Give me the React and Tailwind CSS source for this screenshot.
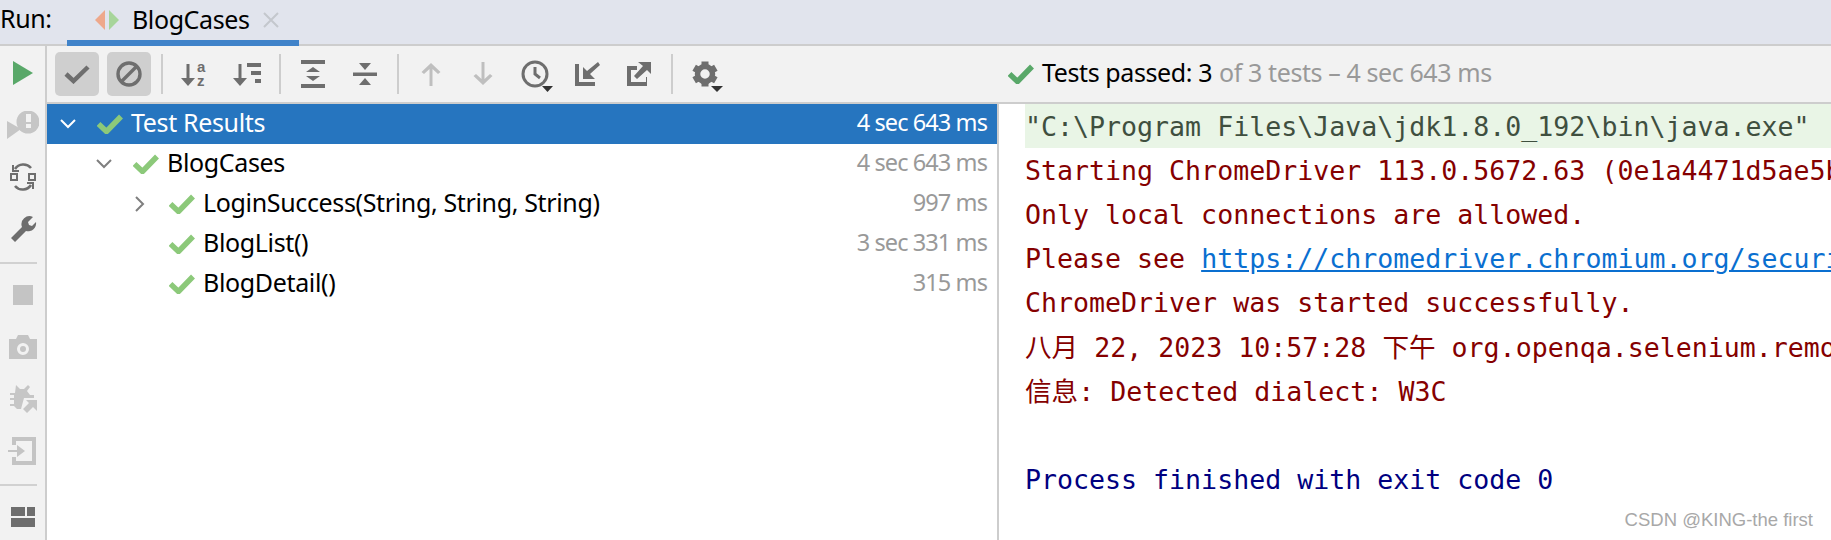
const ui = "font-['Noto_Sans',sans-serif]"

function Tick({ className }) {
  return (
    <svg className={className} width="26" height="20" viewBox="0 0 26 20">
      <path d="M1.5 10 L9.5 17.5 L24 2.5" fill="none" stroke="currentColor" strokeWidth="5.5" />
    </svg>
  )
}

function Chevron({ open, className }) {
  return (
    <svg className={className} width="18" height="18" viewBox="0 0 18 18">
      <path d={open ? "M2 5 L9 12 L16 5" : "M5 2 L12 9 L5 16"} fill="none" stroke="currentColor" strokeWidth="2" />
    </svg>
  )
}

function Side({ children }) {
  return <div className="flex h-[52px] w-[45px] shrink-0 items-center justify-center">{children}</div>
}

function Tool({ children, active }) {
  return (
    <div className={`flex h-11 w-11 shrink-0 items-center justify-center rounded-[5px] ${active ? "bg-[#cfcfcf]" : ""}`}>
      {children}
    </div>
  )
}

function Sep() {
  return <div className="mx-[10px] h-10 w-[2px] shrink-0 bg-[#cdcdcd]" />
}

function Row({ indent, chevron, name, time, selected }) {
  return (
    <div className={`flex h-10 items-center pr-[10px] ${selected ? "bg-[#2675bf] text-white" : "text-black"}`}>
      <div className="flex w-[30px] shrink-0 justify-center" style={{ marginLeft: indent }}>
        {chevron && <Chevron open={chevron === "open"} className={selected ? "text-white" : "text-[#7f7f7f]"} />}
      </div>
      <Tick className="ml-[14px] mr-[8px] shrink-0 text-[#8cc97a]" />
      <span className="pb-[2px] text-[25px] tracking-[-0.35px] whitespace-nowrap">{name}</span>
      <span className={`ml-auto pb-[2px] text-[23.5px] tracking-[-0.9px] whitespace-nowrap ${selected ? "text-white" : "text-[#999999]"}`}>{time}</span>
    </div>
  )
}

function ConsoleLine({ children, className = "pl-[26px]" }) {
  return <div className={`flex h-[44.1px] items-center pt-[2px] whitespace-pre ${className}`}>{children}</div>
}

export default function App() {
  return (
    <div className={`relative flex h-[540px] w-[1831px] flex-col overflow-hidden bg-white ${ui}`}>
      {/* tab header */}
      <div className="flex h-[46px] shrink-0 items-stretch border-b-2 border-[#cdcdcd] bg-[#e1e4ed]">
        <div className="flex w-[67px] items-center pb-[6px] text-[25px] tracking-[-0.4px] text-black">Run:</div>
        <div className="-mb-[2px] flex w-[232px] items-center border-b-[6px] border-[#4083c9] pl-[28px]">
          <svg width="24" height="20" viewBox="0 0 24 20" className="mr-[13px] shrink-0">
            <path d="M10 0 L10 20 L0 10 Z" fill="#eea88b" />
            <path d="M14 0 L14 20 L24 10 Z" fill="#a7d59a" />
          </svg>
          <span className="text-[25px] tracking-[-0.4px] text-black">BlogCases</span>
          <svg width="16" height="16" viewBox="0 0 16 16" className="ml-[14px] shrink-0">
            <path d="M1 1 L15 15 M15 1 L1 15" stroke="#c4c7cd" strokeWidth="2" />
          </svg>
        </div>
      </div>

      <div className="flex min-h-0 flex-1">
        {/* left strip */}
        <div className="flex w-[47px] shrink-0 flex-col border-r-2 border-[#cdcdcd] bg-[#f2f2f2]">
          <div className="mt-[1px]" />
          <Side>
            <svg width="20" height="24" viewBox="0 0 20 24"><path d="M0 0 L20 12 L0 24 Z" fill="#59a869" /></svg>
          </Side>
          <Side>
            <svg width="32" height="28" viewBox="0 0 32 28">
              <path d="M0 10 L14 18 L0 28 Z" fill="#c6c6c6" />
              <circle cx="21" cy="11" r="11.5" fill="#c6c6c6" />
              <rect x="19" y="3" width="5" height="8" fill="#f2f2f2" />
              <rect x="19" y="13" width="5" height="4" fill="#f2f2f2" />
            </svg>
          </Side>
          <Side>
            <svg width="26" height="30" viewBox="0 0 26 30" fill="none" stroke="#6e6e6e" strokeWidth="2.6">
              <path d="M5 7 A10 10 0 0 1 21 6" />
              <path d="M21 23 A10 10 0 0 1 5 24" />
              <path d="M3 3 L3 9 L9 9" strokeWidth="2" />
              <path d="M23 27 L23 21 L17 21" strokeWidth="2" />
              <rect x="1" y="12" width="6" height="6" strokeWidth="2" />
              <rect x="19" y="12" width="6" height="6" strokeWidth="2" />
            </svg>
          </Side>
          <Side>
            <svg width="28" height="28" viewBox="0 0 28 28">
              <path d="M2 23 L13 12 A8 8 0 0 1 24 2 L19 7 L20 10 L23 11 L27 7 A8 8 0 0 1 17 16 L6 27 Z" fill="#6e6e6e" />
            </svg>
          </Side>
          <div className="mt-[7px] mb-[5px] mr-[8px] h-[2px] shrink-0 bg-[#d1d1d1]" />
          <Side>
            <div className="h-5 w-5 bg-[#c4c4c4]" />
          </Side>
          <Side>
            <svg width="28" height="24" viewBox="0 0 28 24">
              <path fillRule="evenodd" d="M0 4 H7 L9 0 H19 L21 4 H28 V24 H0 Z M14 8 A6 6 0 1 0 14 20 A6 6 0 1 0 14 8 Z M14 11 A3 3 0 1 1 14 17 A3 3 0 1 1 14 11 Z" fill="#c4c4c4" />
            </svg>
          </Side>
          <Side>
            <svg width="30" height="30" viewBox="0 0 30 30">
              <path d="M8 1 L12 5 H16 L20 1 L22 3 L19 7 L22 11 L26 11 V14 L16 14 L13 25 H9 L6 22 H2 V20 H6 V16 H2 V14 H6 V11 H2 V9 H7 Z" fill="#c6c6c6" />
              <path d="M18 16 H29 V27 L25 23 L19 29 L15 25 L21 19 Z" fill="#c6c6c6" />
            </svg>
          </Side>
          <Side>
            <svg width="30" height="28" viewBox="0 0 30 28" fill="#c4c4c4">
              <path fillRule="evenodd" d="M4 0 H28 V28 H4 V20 H8 V24 H24 V4 H8 V8 H4 Z" />
              <path d="M0 13 H9 V8 L17 14 L9 20 V15 H0 Z" />
            </svg>
          </Side>
          <div className="mt-[7px] mb-[5px] mr-[8px] h-[2px] shrink-0 bg-[#d1d1d1]" />
          <Side>
            <svg width="24" height="20" viewBox="0 0 24 20" fill="#6e6e6e">
              <rect x="0" y="0" width="14" height="9" />
              <rect x="16" y="0" width="8" height="9" />
              <rect x="0" y="11" width="24" height="9" />
            </svg>
          </Side>
        </div>

        {/* main */}
        <div className="flex min-w-0 flex-1 flex-col">
          {/* toolbar */}
          <div className="flex h-[58px] shrink-0 items-center border-b-2 border-[#cdcdcd] bg-[#f2f2f2] pl-[8px]">
            <Tool active>
              <svg width="26" height="20" viewBox="0 0 26 20"><path d="M2 10 L9.5 17 L24 3" fill="none" stroke="#6e6e6e" strokeWidth="4.5" /></svg>
            </Tool>
            <div className="w-[8px] shrink-0" />
            <Tool active>
              <svg width="26" height="26" viewBox="0 0 26 26" fill="none" stroke="#6e6e6e" strokeWidth="3.4">
                <circle cx="13" cy="13" r="11" />
                <path d="M6 20 L20 6" />
              </svg>
            </Tool>
            <Sep />
            <Tool>
              <svg width="28" height="30" viewBox="0 -2 28 30" fill="#6e6e6e">
                <path d="M5.5 3 H8.5 V17 H14 L7 25 L0 17 H5.5 Z" />
                <text x="16" y="11" fontSize="15" fontWeight="700" fontFamily="Liberation Sans">a</text>
                <text x="16" y="25" fontSize="15" fontWeight="700" fontFamily="Liberation Sans">z</text>
              </svg>
            </Tool>
            <div className="w-[8px] shrink-0" />
            <Tool>
              <svg width="28" height="26" viewBox="0 0 28 26" fill="#6e6e6e">
                <path d="M5.5 3 H8.5 V17 H14 L7 25 L0 17 H5.5 Z" />
                <rect x="14" y="2" width="14" height="4" />
                <rect x="18" y="10" width="10" height="4" />
                <rect x="22" y="18" width="6" height="4" />
              </svg>
            </Tool>
            <Sep />
            <Tool>
              <svg width="26" height="28" viewBox="0 0 26 28" fill="#6e6e6e">
                <rect x="1" y="0" width="24" height="4" />
                <rect x="1" y="24" width="24" height="4" />
                <path d="M13 7 L20 12 H6 Z" />
                <path d="M13 21 L20 16 H6 Z" />
              </svg>
            </Tool>
            <div className="w-[8px] shrink-0" />
            <Tool>
              <svg width="26" height="26" viewBox="0 0 26 26" fill="#6e6e6e">
                <rect x="1" y="11.5" width="24" height="3.5" />
                <path d="M13 9 L19 2 H7 Z" />
                <path d="M13 17 L19 24 H7 Z" />
              </svg>
            </Tool>
            <Sep />
            <Tool>
              <svg width="20" height="24" viewBox="0 0 20 24" fill="#bfbfbf"><path d="M8.5 24 V7 L3 12 L0.5 10 L10 1 L19.5 10 L17 12 L11.5 7 V24 Z" /></svg>
            </Tool>
            <div className="w-[8px] shrink-0" />
            <Tool>
              <svg width="20" height="24" viewBox="0 0 20 24" fill="#bfbfbf"><path d="M8.5 0 V17 L3 12 L0.5 14 L10 23 L19.5 14 L17 12 L11.5 17 V0 Z" /></svg>
            </Tool>
            <div className="w-[8px] shrink-0" />
            <Tool>
              <svg width="38" height="38" viewBox="-19 -19 38 38" fill="none">
                <circle cx="0" cy="0" r="12" stroke="#6e6e6e" strokeWidth="3" />
                <path d="M0 -7 V0 L5 4" stroke="#6e6e6e" strokeWidth="3" />
                <path d="M7 12 H18 L12.5 18 Z" fill="#333333" />
              </svg>
            </Tool>
            <div className="w-[8px] shrink-0" />
            <Tool>
              <svg width="26" height="26" viewBox="0 0 26 26" fill="#6e6e6e">
                <path d="M1 3 H5 V21 H21 V25 H1 Z" />
                <path d="M24 1 L26 4 L16 13 L21 18 H9 V6 L13 10 Z" />
              </svg>
            </Tool>
            <div className="w-[8px] shrink-0" />
            <Tool>
              <svg width="26" height="26" viewBox="0 0 26 26" fill="#6e6e6e">
                <path d="M1 5 H11 V9 H5 V21 H20 V16 H21 V25 H1 Z" />
                <path d="M12 1 H25 V13 L21 9 L11 18 L8 15 L17 5 Z" />
              </svg>
            </Tool>
            <Sep />
            <Tool>
              <svg width="38" height="38" viewBox="-19 -19 38 38">
                <circle cx="0" cy="0" r="7.5" fill="none" stroke="#6e6e6e" strokeWidth="5.5" />
                <g fill="#6e6e6e">
                  <rect x="-3.5" y="-12.5" width="7" height="5" />
                  <rect x="-3.5" y="7.5" width="7" height="5" />
                  <rect x="-3.5" y="-12.5" width="7" height="5" transform="rotate(60)" />
                  <rect x="-3.5" y="7.5" width="7" height="5" transform="rotate(60)" />
                  <rect x="-3.5" y="-12.5" width="7" height="5" transform="rotate(120)" />
                  <rect x="-3.5" y="7.5" width="7" height="5" transform="rotate(120)" />
                </g>
                <path d="M6 12 H18 L12 18 Z" fill="#333333" />
              </svg>
            </Tool>
            <div className="ml-[281px] flex items-center whitespace-nowrap text-[25px] tracking-[-0.4px]">
              <Tick className="mr-[8px] text-[#59a869]" />
              <span className="pb-[3px] text-black">Tests passed: 3</span>
              <span className="ml-[7px] pb-[3px] text-[#999999]">of 3 tests – 4 sec 643 ms</span>
            </div>
          </div>

          <div className="flex min-h-0 flex-1">
            {/* tree */}
            <div className="w-[952px] shrink-0 border-r-2 border-[#cdcdcd]">
              <Row indent={6} chevron="open" name="Test Results" time="4 sec 643 ms" selected />
              <Row indent={42} chevron="open" name="BlogCases" time="4 sec 643 ms" />
              <Row indent={78} chevron="closed" name="LoginSuccess(String, String, String)" time="997 ms" />
              <Row indent={78} name="BlogList()" time="3 sec 331 ms" />
              <Row indent={78} name="BlogDetail()" time="315 ms" />
            </div>

            {/* console */}
            <div className="min-w-0 flex-1 overflow-hidden font-['DejaVu_Sans_Mono','Noto_Sans_CJK_SC',monospace] text-[26.6px] text-[#850000]">
              <ConsoleLine className="ml-[26px] bg-[#e9f5e6] text-[#3f4f3f]">{'"C:\\Program Files\\Java\\jdk1.8.0_192\\bin\\java.exe" ...'}</ConsoleLine>
              <ConsoleLine>Starting ChromeDriver 113.0.5672.63 (0e1a4471d5ae5bf128b1bd8f4d627c8cbd55f70c)</ConsoleLine>
              <ConsoleLine>Only local connections are allowed.</ConsoleLine>
              <ConsoleLine>
                Please see <span className="text-[#0a6fd0] underline">https://chromedriver.chromium.org/security-considerations</span>
              </ConsoleLine>
              <ConsoleLine>ChromeDriver was started successfully.</ConsoleLine>
              <ConsoleLine>八月 22, 2023 10:57:28 下午 org.openqa.selenium.remote.ProtocolHandshake</ConsoleLine>
              <ConsoleLine>信息: Detected dialect: W3C</ConsoleLine>
              <ConsoleLine> </ConsoleLine>
              <ConsoleLine className="pl-[26px] text-[#000080]">Process finished with exit code 0</ConsoleLine>
            </div>
          </div>
        </div>
      </div>

      {/* watermark */}
      <div className="absolute bottom-[6px] right-[18px] font-['Liberation_Sans',sans-serif] text-[18.5px] text-[#a8a8a8]">CSDN @KING-the first</div>
    </div>
  )
}
